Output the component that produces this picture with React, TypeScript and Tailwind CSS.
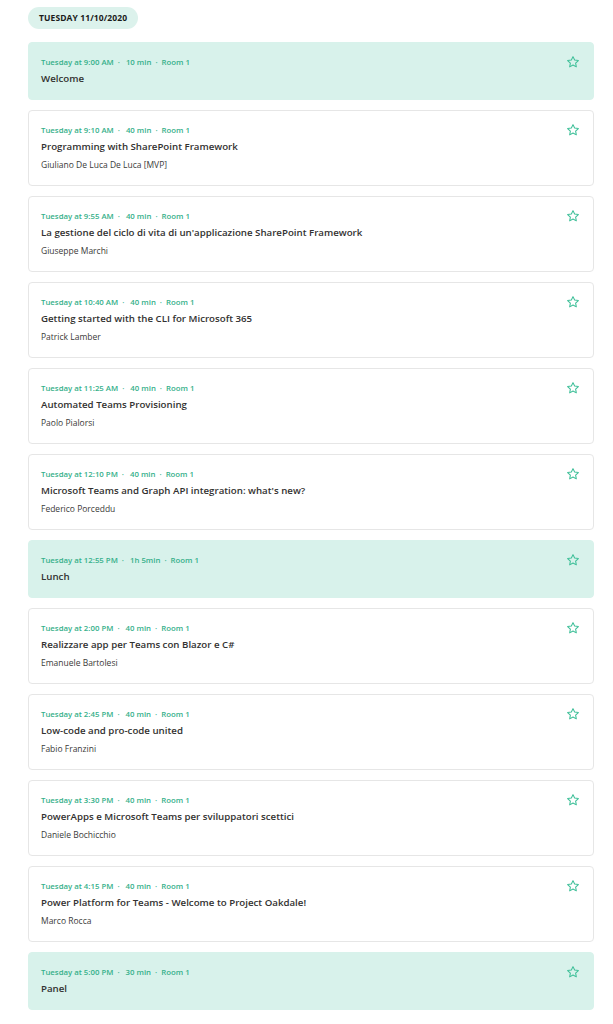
import React from 'react';

interface Session {
  time: string;
  duration: string;
  room: string;
  title: string;
  speaker?: string;
  highlight?: boolean;
}

const sessions: Session[] = [
  { time: 'Tuesday at 9:00 AM', duration: '10 min', room: 'Room 1', title: 'Welcome', highlight: true },
  { time: 'Tuesday at 9:10 AM', duration: '40 min', room: 'Room 1', title: 'Programming with SharePoint Framework', speaker: 'Giuliano De Luca De Luca [MVP]' },
  { time: 'Tuesday at 9:55 AM', duration: '40 min', room: 'Room 1', title: "La gestione del ciclo di vita di un'applicazione SharePoint Framework", speaker: 'Giuseppe Marchi' },
  { time: 'Tuesday at 10:40 AM', duration: '40 min', room: 'Room 1', title: 'Getting started with the CLI for Microsoft 365', speaker: 'Patrick Lamber' },
  { time: 'Tuesday at 11:25 AM', duration: '40 min', room: 'Room 1', title: 'Automated Teams Provisioning', speaker: 'Paolo Pialorsi' },
  { time: 'Tuesday at 12:10 PM', duration: '40 min', room: 'Room 1', title: "Microsoft Teams and Graph API integration: what's new?", speaker: 'Federico Porceddu' },
  { time: 'Tuesday at 12:55 PM', duration: '1h 5min', room: 'Room 1', title: 'Lunch', highlight: true },
  { time: 'Tuesday at 2:00 PM', duration: '40 min', room: 'Room 1', title: 'Realizzare app per Teams con Blazor e C#', speaker: 'Emanuele Bartolesi' },
  { time: 'Tuesday at 2:45 PM', duration: '40 min', room: 'Room 1', title: 'Low-code and pro-code united', speaker: 'Fabio Franzini' },
  { time: 'Tuesday at 3:30 PM', duration: '40 min', room: 'Room 1', title: 'PowerApps e Microsoft Teams per sviluppatori scettici', speaker: 'Daniele Bochicchio' },
  { time: 'Tuesday at 4:15 PM', duration: '40 min', room: 'Room 1', title: 'Power Platform for Teams - Welcome to Project Oakdale!', speaker: 'Marco Rocca' },
  { time: 'Tuesday at 5:00 PM', duration: '30 min', room: 'Room 1', title: 'Panel', highlight: true },
];

function StarIcon() {
  return (
    <svg className="w-[14px] h-[14px] text-[#3dbf98]" viewBox="0 0 24 24" fill="none" stroke="currentColor" strokeWidth={1.8} strokeLinejoin="round">
      <path d="M12 2.8l2.8 5.9 6.4.8-4.7 4.4 1.2 6.4L12 17.2l-5.7 3.1 1.2-6.4-4.7-4.4 6.4-.8z" />
    </svg>
  );
}

function SessionCard({ s }: { s: Session }) {
  return (
    <div
      className={
        s.highlight
          ? 'flex justify-between rounded-[4px] border border-[#d8f2eb] bg-[#d8f2eb] pl-[12px] pr-[13px] pt-[13px] pb-[12px]'
          : 'flex justify-between rounded-[4px] border border-[#e6e6e6] bg-white pl-[12px] pr-[13px] pt-[13px] pb-[14px]'
      }
    >
      <div className="min-w-0">
        <div className="flex items-center text-[7.8px] leading-[12px] font-semibold text-[#35b08a]">
          <span>{s.time}</span>
          <span className="mx-[4px]">·</span>
          <span className="ml-[2px]">{s.duration}</span>
          <span className="mx-[4px]">·</span>
          <span>{s.room}</span>
        </div>
        <div className="mt-[3px] text-[9.7px] leading-[16px] font-semibold text-[#323130]">{s.title}</div>
        {s.speaker && <div className="mt-[4px] text-[8.5px] leading-[12px] text-[#3b3a39]">{s.speaker}</div>}
      </div>
      <div className="shrink-0 -mt-[1px]">
        <StarIcon />
      </div>
    </div>
  );
}

export default function App() {
  return (
    <div className="min-h-screen bg-white pl-[28px] pr-[19px] pt-[7px] pb-[16px]" style={{ fontFamily: '"Open Sans", "Noto Sans", sans-serif' }}>
      <div className="flex w-fit items-center h-[22px] rounded-full bg-[#dcf2ec] px-[11px] text-[8.5px] font-bold tracking-[0.1px] text-[#1b1b1b]">
        TUESDAY 11/10/2020
      </div>
      <div className="mt-[13px] flex flex-col gap-[10px]">
        {sessions.map((s, i) => (
          <SessionCard key={i} s={s} />
        ))}
      </div>
    </div>
  );
}
